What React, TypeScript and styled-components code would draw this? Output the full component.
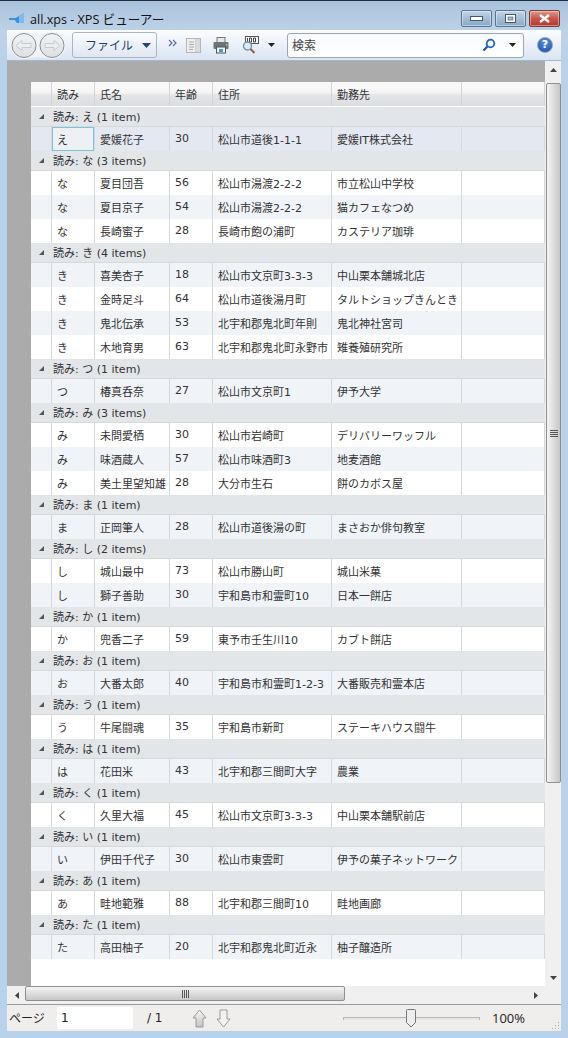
import React from 'react';
import styled, { createGlobalStyle } from 'styled-components';

const Global = createGlobalStyle`
  html, body {
    margin: 0;
    padding: 0;
    background: #b9d1ea;
  }
  * {
    box-sizing: border-box;
  }
`;

const uiFont = `"Open Sans", "Noto Sans CJK JP", sans-serif`;
const gridFont = `"DejaVu Sans", "Noto Sans CJK JP", sans-serif`;

const Win = styled.div`
  width: 568px;
  height: 1038px;
  display: flex;
  flex-direction: column;
  background: linear-gradient(#a9c3dc 0, #bcd2e8 30px, #b9d1ea 60px);
  border-top: 1px solid #1e2c3c;
  overflow: hidden;
`;

const TitleBar = styled.div`
  height: 29px;
  flex: none;
  display: flex;
  align-items: center;
  padding: 6px 8px 0 9px;
`;

const AppTitle = styled.div`
  display: flex;
  align-items: center;
  gap: 3px;
  flex: 1;
  font: 12.6px ${uiFont};
  color: #111;
`;

const WinButtons = styled.div`
  display: flex;
  gap: 3px;
  align-self: flex-start;
  margin-top: 3px;
`;

const WinBtn = styled.div<{ $close?: boolean }>`
  width: 31px;
  height: 17px;
  border: 1px solid ${p => (p.$close ? '#7d3a30' : '#5a7590')};
  border-radius: 2px;
  display: flex;
  align-items: center;
  justify-content: center;
  background: ${p =>
    p.$close
      ? 'linear-gradient(#dc9a8c 0, #c9574a 50%, #b03a2e 100%)'
      : 'linear-gradient(#c4d6e8 0, #a3bdd6 50%, #8aa8c6 100%)'};
  box-shadow: inset 0 0 0 1px rgba(255, 255, 255, 0.4);
`;

const Body = styled.div`
  flex: 1;
  margin: 0 7px 7px;
  display: flex;
  flex-direction: column;
  min-height: 0;
`;

const Toolbar = styled.div`
  height: 31px;
  flex: none;
  display: flex;
  align-items: center;
  background: linear-gradient(#fbfdff 0, #eef3fa 40%, #d9e5f3 100%);
  border-bottom: 1px solid #a3b8cc;
`;

const NavPill = styled.svg`
  margin-left: 3px;
  flex: none;
`;

const FileMenu = styled.div`
  width: 85px;
  height: 26px;
  margin-left: 6px;
  flex: none;
  display: flex;
  align-items: center;
  justify-content: space-between;
  padding: 0 5px 0 12px;
  font: 12px ${uiFont};
  white-space: nowrap;
  color: #1d3f77;
  border: 1px solid #a9b5c2;
  border-radius: 3px;
  background: linear-gradient(#fafcfe, #dfe7f1);
`;

const Chevrons = styled.div`
  align-self: flex-start;
  margin: 3px 0 0 11px;
  width: 10px;
  height: 8px;
  flex: none;
`;

const ToolIcons = styled.div`
  display: flex;
  align-items: center;
  margin-left: 8px;
  width: 101px;
  flex: none;
`;

const ToolIcon = styled.div<{ $w: number; $gap?: number }>`
  width: ${p => p.$w}px;
  margin-left: ${p => p.$gap || 0}px;
  display: flex;
`;

const SearchBox = styled.div`
  width: 237px;
  height: 25px;
  flex: none;
  display: flex;
  align-items: center;
  padding: 0 7px 0 4px;
  background: linear-gradient(#f8fafd, #ffffff);
  border: 1px solid #9aa6b2;
  border-radius: 3px;
  font: 12px ${uiFont};
  color: #444;
`;

const SearchLabel = styled.span`
  flex: 1;
`;

const SearchCaret = styled.svg`
  margin-left: 13px;
`;

const HelpIcon = styled.div`
  margin-left: 13px;
  width: 16px;
  height: 16px;
  flex: none;
  border-radius: 50%;
  border: 1px solid #8ea2c0;
  background: radial-gradient(circle at 50% 30%, #5b8ede, #1d4da6);
  color: #fff;
  font: bold 11px/14px ${gridFont};
  text-align: center;
`;

const Content = styled.div`
  flex: 1;
  min-height: 0;
  display: grid;
  grid-template-columns: 1fr 16px;
  grid-template-rows: 1fr 18px;
`;

const Viewport = styled.div`
  background: #ababab;
  padding: 21px 0 0 24px;
  overflow: hidden;
  display: flex;
  flex-direction: column;
`;

const Page = styled.div`
  flex: 1;
  background: #fff;
  font: 11px ${gridFont};
  color: #333;
`;

const columns = '21px 43px 75px 43px 119px 130px 1fr';

const HeaderRow = styled.div`
  height: 25px;
  display: grid;
  grid-template-columns: ${columns};
  background: linear-gradient(#fafafa 0, #f4f4f5 45%, #e4e5e7 55%, #dcdde0 100%);
  border-bottom: 1px solid #fff;
`;

const HeaderCell = styled.div`
  display: flex;
  align-items: center;
  padding-left: 5px;
  border-right: 1px solid #d2d4d6;
`;

const GroupRow = styled.div`
  height: 20px;
  display: flex;
  align-items: center;
  padding-bottom: 1px;
  background: #e2e6e9;
  border-bottom: 1px solid #d6d9dc;
`;

const Expander = styled.div`
  width: 0;
  height: 0;
  margin: 0 9px 0 8px;
  border-style: solid;
  border-width: 0 0 5px 5px;
  border-color: transparent transparent #555 transparent;
`;

const DataRow = styled.div<{ $tone: 'plain' | 'alt' | 'selected' }>`
  height: 24px;
  display: grid;
  grid-template-columns: ${columns};
  background: ${p =>
    p.$tone === 'selected' ? '#e3e8f1' : p.$tone === 'alt' ? '#f0f4f9' : '#fff'};
`;

const Cell = styled.div<{ $focus?: boolean }>`
  display: flex;
  align-items: center;
  padding: 0 0 1px 5px;
  white-space: nowrap;
  overflow: hidden;
  border-right: 1px solid #d5d7da;
  ${p =>
    p.$focus &&
    `background: #edf1f5;
     box-shadow: inset 0 0 0 1px #7fc3d6;`}
`;

const BlankCell = styled(Cell)`
  padding: 0;
`;

const VScroll = styled.div`
  background: #f0f0f0;
  display: flex;
  flex-direction: column;
  align-items: center;
  justify-content: space-between;
  padding: 4px 0;
  position: relative;
`;

const VThumb = styled.div`
  position: absolute;
  top: 22px;
  left: 1px;
  right: 0;
  height: 700px;
  border: 1px solid #8e8f8f;
  border-radius: 2px;
  background: linear-gradient(90deg, #f4f4f4, #e0e0e0 45%, #c6c6c6);
  display: flex;
  align-items: center;
  justify-content: center;
`;

const HScroll = styled.div`
  background: #f0f0f0;
  position: relative;
  display: flex;
  align-items: center;
  justify-content: space-between;
  padding: 0 5px 0 6px;
`;

const HThumb = styled.div`
  position: absolute;
  left: 18px;
  top: 0;
  width: 320px;
  height: 15px;
  border: 1px solid #8e8f8f;
  border-radius: 2px;
  background: linear-gradient(#f4f4f4, #e0e0e0 45%, #c6c6c6);
  display: flex;
  align-items: center;
  justify-content: center;
`;

const Corner = styled.div`
  background: #f0f0f0;
`;

const StatusBar = styled.div`
  height: 27px;
  flex: none;
  display: flex;
  align-items: center;
  background: #f0eded;
  border-top: 1px solid #9a9a9a;
  position: relative;
  font: 12px ${gridFont};
  color: #222;
`;

const PageLabel = styled.span`
  width: 50px;
  padding-left: 2px;
  flex: none;
  font-family: ${uiFont};
`;

const PageInput = styled.div`
  width: 76px;
  height: 22px;
  flex: none;
  background: #fff;
  border-radius: 2px;
  padding: 0 4px;
  line-height: 22px;
  color: #222;
`;

const PageTotal = styled.span`
  margin-left: 14px;
  width: 45px;
  flex: none;
`;

const PageArrows = styled.div`
  display: flex;
  gap: 9px;
  flex: none;
`;

const ZoomTrack = styled.div`
  width: 137px;
  height: 3px;
  margin-left: 112px;
  flex: none;
  background: #e6e6e6;
  border: 1px solid #b5b5b5;
  border-width: 1px 1px 0;
  position: relative;
`;

const ZoomThumb = styled.svg`
  position: absolute;
  left: 62px;
  top: -9px;
`;

const ZoomValue = styled.span`
  margin-left: 12px;
  font-family: ${uiFont};
  font-size: 13px;
`;

const Grip = styled.svg`
  position: absolute;
  right: 1px;
  bottom: 1px;
`;

type Person = [string, string, string, string, string];

const groups: { key: string; rows: Person[] }[] = [
  { key: 'え', rows: [['え', '愛媛花子', '30', '松山市道後1-1-1', '愛媛IT株式会社']] },
  {
    key: 'な',
    rows: [
      ['な', '夏目団吾', '56', '松山市湯渡2-2-2', '市立松山中学校'],
      ['な', '夏目京子', '54', '松山市湯渡2-2-2', '猫カフェなつめ'],
      ['な', '長崎蜜子', '28', '長崎市飽の浦町', 'カステリア珈琲'],
    ],
  },
  {
    key: 'き',
    rows: [
      ['き', '喜美杏子', '18', '松山市文京町3-3-3', '中山栗本舗城北店'],
      ['き', '金時足斗', '64', '松山市道後湯月町', 'タルトショップきんとき'],
      ['き', '鬼北伝承', '53', '北宇和郡鬼北町年則', '鬼北神社宮司'],
      ['き', '木地育男', '63', '北宇和郡鬼北町永野市', '雉養殖研究所'],
    ],
  },
  { key: 'つ', rows: [['つ', '椿真呑奈', '27', '松山市文京町1', '伊予大学']] },
  {
    key: 'み',
    rows: [
      ['み', '未問愛栖', '30', '松山市岩崎町', 'デリバリーワッフル'],
      ['み', '味酒蔵人', '57', '松山市味酒町3', '地麦酒館'],
      ['み', '美土里望知雄', '28', '大分市生石', '餅のカボス屋'],
    ],
  },
  { key: 'ま', rows: [['ま', '正岡筆人', '28', '松山市道後湯の町', 'まさおか俳句教室']] },
  {
    key: 'し',
    rows: [
      ['し', '城山最中', '73', '松山市勝山町', '城山米菓'],
      ['し', '獅子善助', '30', '宇和島市和霊町10', '日本一餅店'],
    ],
  },
  { key: 'か', rows: [['か', '兜香二子', '59', '東予市壬生川10', 'カブト餅店']] },
  { key: 'お', rows: [['お', '大番太郎', '40', '宇和島市和霊町1-2-3', '大番販売和霊本店']] },
  { key: 'う', rows: [['う', '牛尾闘魂', '35', '宇和島市新町', 'ステーキハウス闘牛']] },
  { key: 'は', rows: [['は', '花田米', '43', '北宇和郡三間町大字', '農業']] },
  { key: 'く', rows: [['く', '久里大福', '45', '松山市文京町3-3-3', '中山栗本舗駅前店']] },
  { key: 'い', rows: [['い', '伊田千代子', '30', '松山市東雲町', '伊予の菓子ネットワーク']] },
  { key: 'あ', rows: [['あ', '畦地範雅', '88', '北宇和郡三間町10', '畦地画廊']] },
  { key: 'た', rows: [['た', '高田柚子', '20', '北宇和郡鬼北町近永', '柚子醸造所']] },
];

const headers = ['', '読み', '氏名', '年齢', '住所', '勤務先', ''];

function NavButtons() {
  return (
    <NavPill width="56" height="27" viewBox="0 0 56 27">
      <defs>
        <linearGradient id="nav" x1="0" y1="0" x2="0" y2="1">
          <stop offset="0" stopColor="#f2f3f4" />
          <stop offset="1" stopColor="#dde0e3" />
        </linearGradient>
      </defs>
      <path
        d="M14 0c5 0 8 2 14 2s9-2 14-2a13.5 13.5 0 0 1 0 27c-5 0-8-2-14-2s-9 2-14 2a13.5 13.5 0 0 1 0-27z"
        fill="#f1f3f5"
      />
      <circle cx="14" cy="13.5" r="12" fill="url(#nav)" stroke="#8a9098" />
      <circle cx="42" cy="13.5" r="12" fill="url(#nav)" stroke="#8a9098" />
      <path d="M6 13.5 12 8.5v3h9v4h-9v3z" fill="#eceef0" stroke="#c6cacd" />
      <path d="M50 13.5 44 8.5v3h-9v4h9v3z" fill="#eceef0" stroke="#c6cacd" />
    </NavPill>
  );
}

function PageArrow({ up }: { up?: boolean }) {
  return (
    <svg width="15" height="19" viewBox="0 0 15 19">
      <path
        d={up ? 'M7.5 1 14 9h-3v9H4V9H1z' : 'M7.5 18 14 10h-3V1H4v9H1z'}
        fill={up ? 'url(#pa)' : '#f2f2f2'}
        stroke="#9a9a9a"
      />
      <defs>
        <linearGradient id="pa" x1="0" y1="0" x2="0" y2="1">
          <stop offset="0" stopColor="#f6f6f6" />
          <stop offset="1" stopColor="#c4c4c4" />
        </linearGradient>
      </defs>
    </svg>
  );
}

function ScrollTri({ d }: { d: string }) {
  return (
    <svg width="9" height="9" viewBox="0 0 9 9">
      <path d={d} fill="#444" />
    </svg>
  );
}

export default function App() {
  let index = 0;

  return (
    <Win>
      <Global />
      <TitleBar>
        <AppTitle>
          <svg width="18" height="11" viewBox="0 0 18 11">
            <path d="M0 6h7" stroke="#2a7ac0" strokeWidth="1.5" />
            <path d="M5 6 15 0v10H8z" fill="#3d8fd8" />
            <path d="M10 3l5-3v10H10z" fill="#7fbdf0" />
          </svg>
          <span>all.xps - XPS ビューアー</span>
        </AppTitle>
        <WinButtons>
          <WinBtn>
            <svg width="13" height="5" viewBox="0 0 13 5">
              <rect x=".5" y=".5" width="12" height="4" fill="#fff" stroke="#44586e" />
            </svg>
          </WinBtn>
          <WinBtn>
            <svg width="11" height="9" viewBox="0 0 11 9">
              <rect x=".5" y=".5" width="10" height="8" fill="#fff" stroke="#44586e" />
              <rect x="3" y="3" width="5" height="3" fill="#a3bdd6" stroke="#44586e" strokeWidth=".6" />
            </svg>
          </WinBtn>
          <WinBtn $close>
            <svg width="13" height="9" viewBox="0 0 13 9">
              <path d="M2 1l9 7M11 1 2 8" stroke="#fff" strokeWidth="2.4" />
            </svg>
          </WinBtn>
        </WinButtons>
      </TitleBar>

      <Body>
        <Toolbar>
          <NavButtons />
          <FileMenu>
            <span>ファイル</span>
            <svg width="9" height="5" viewBox="0 0 9 5">
              <path d="M0 0h9L4.5 5z" fill="#27466f" />
            </svg>
          </FileMenu>
          <Chevrons>
            <svg width="10" height="8" viewBox="0 0 10 8">
              <path d="M1 1l3 3-3 3M5 1l3 3-3 3" fill="none" stroke="#5a6fa0" strokeWidth="1.2" />
            </svg>
          </Chevrons>
          <ToolIcons>
            <ToolIcon $w={15}>
              <svg width="15" height="15" viewBox="0 0 15 15">
                <rect x=".5" y=".5" width="14" height="14" fill="#eceeef" stroke="#b4b6b8" />
                <path d="M10 .5v14" stroke="#b4b6b8" />
                <rect x="10" y="1" width="4" height="13" fill="#d8dadc" />
                <path d="M3 4h5M3 6.5h5M3 9h5M3 11.5h4" stroke="#a8aaac" />
              </svg>
            </ToolIcon>
            <ToolIcon $w={16} $gap={12}>
              <svg width="16" height="17" viewBox="0 0 16 17">
                <rect x="4" y=".5" width="8" height="5" fill="#e8e8e8" stroke="#777" />
                <rect x=".5" y="5" width="15" height="7" rx="1" fill="#6d747a" />
                <rect x="3.5" y="10" width="9" height="6" fill="#f4f4f4" stroke="#555" />
                <rect x="6" y="12" width="4" height="3" fill="#3aa0c8" />
                <rect x="13" y="7" width="1.5" height="1.5" fill="#7be07b" />
              </svg>
            </ToolIcon>
            <ToolIcon $w={17} $gap={13}>
              <svg width="17" height="18" viewBox="0 0 17 18">
                <rect x="3.5" y=".5" width="13" height="7" fill="#fff" stroke="#555" />
                <path d="M5.5 2v4M7.5 2h2v4h-2zM11.5 2h2v4h-2z" fill="none" stroke="#333" strokeWidth=".9" />
                <circle cx="5.5" cy="10" r="4" fill="#dcebf8" stroke="#6a8fb4" strokeWidth="1.3" />
                <path d="M8.5 13l4 4" stroke="#8c6239" strokeWidth="2" />
              </svg>
            </ToolIcon>
            <ToolIcon $w={7} $gap={9}>
              <svg width="7" height="4" viewBox="0 0 7 4">
                <path d="M0 0h7L3.5 4z" fill="#222" />
              </svg>
            </ToolIcon>
          </ToolIcons>
          <SearchBox>
            <SearchLabel>検索</SearchLabel>
            <svg width="14" height="14" viewBox="0 0 14 14">
              <circle cx="8.5" cy="5.5" r="3.8" fill="none" stroke="#1f66c4" strokeWidth="1.8" />
              <path d="M5.5 8.5 1.5 12.5" stroke="#1f4fa0" strokeWidth="2.2" />
            </svg>
            <SearchCaret width="7" height="4" viewBox="0 0 7 4">
              <path d="M0 0h7L3.5 4z" fill="#222" />
            </SearchCaret>
          </SearchBox>
          <HelpIcon>?</HelpIcon>
        </Toolbar>

        <Content>
          <Viewport>
            <Page>
              <HeaderRow>
                {headers.map((h, i) => (
                  <HeaderCell key={i}>{h}</HeaderCell>
                ))}
              </HeaderRow>
              {groups.map(g => (
                <React.Fragment key={g.key}>
                  <GroupRow>
                    <Expander />
                    読み: {g.key} ({g.rows.length} {g.rows.length > 1 ? 'items' : 'item'})
                  </GroupRow>
                  {g.rows.map(r => {
                    const i = index++;
                    const tone = i === 0 ? 'selected' : i % 2 ? 'plain' : 'alt';
                    return (
                      <DataRow key={r[1]} $tone={tone}>
                        <BlankCell />
                        <Cell $focus={i === 0}>{r[0]}</Cell>
                        <Cell>{r[1]}</Cell>
                        <Cell>{r[2]}</Cell>
                        <Cell>{r[3]}</Cell>
                        <Cell>{r[4]}</Cell>
                        <BlankCell />
                      </DataRow>
                    );
                  })}
                </React.Fragment>
              ))}
            </Page>
          </Viewport>
          <VScroll>
            <ScrollTri d="M4.5 3 8 7H1z" />
            <VThumb>
              <svg width="8" height="7" viewBox="0 0 8 7">
                <path d="M0 .5h8M0 2.5h8M0 4.5h8M0 6.5h8" stroke="#555" />
              </svg>
            </VThumb>
            <ScrollTri d="M1 3h7L4.5 7z" />
          </VScroll>
          <HScroll>
            <ScrollTri d="M2 4.5 6 1v7z" />
            <HThumb>
              <svg width="7" height="8" viewBox="0 0 7 8">
                <path d="M.5 0v8M2.5 0v8M4.5 0v8M6.5 0v8" stroke="#555" />
              </svg>
            </HThumb>
            <ScrollTri d="M7 4.5 3 1v7z" />
          </HScroll>
          <Corner />
        </Content>

        <StatusBar>
          <PageLabel>ページ</PageLabel>
          <PageInput>1</PageInput>
          <PageTotal>/ 1</PageTotal>
          <PageArrows>
            <PageArrow up />
            <PageArrow />
          </PageArrows>
          <ZoomTrack>
            <ZoomThumb width="10" height="19" viewBox="0 0 10 19">
              <path d="M.5 1.5a1 1 0 0 1 1-1h7a1 1 0 0 1 1 1v12L5 18 .5 13.5z" fill="#eee" stroke="#777" />
            </ZoomThumb>
          </ZoomTrack>
          <ZoomValue>100%</ZoomValue>
          <Grip width="9" height="9" viewBox="0 0 9 9">
            <path d="M7 1h1v1H7zM4 4h1v1H4zM7 4h1v1H7zM1 7h1v1H1zM4 7h1v1H4zM7 7h1v1H7z" fill="#aaa" />
          </Grip>
        </StatusBar>
      </Body>
    </Win>
  );
}
